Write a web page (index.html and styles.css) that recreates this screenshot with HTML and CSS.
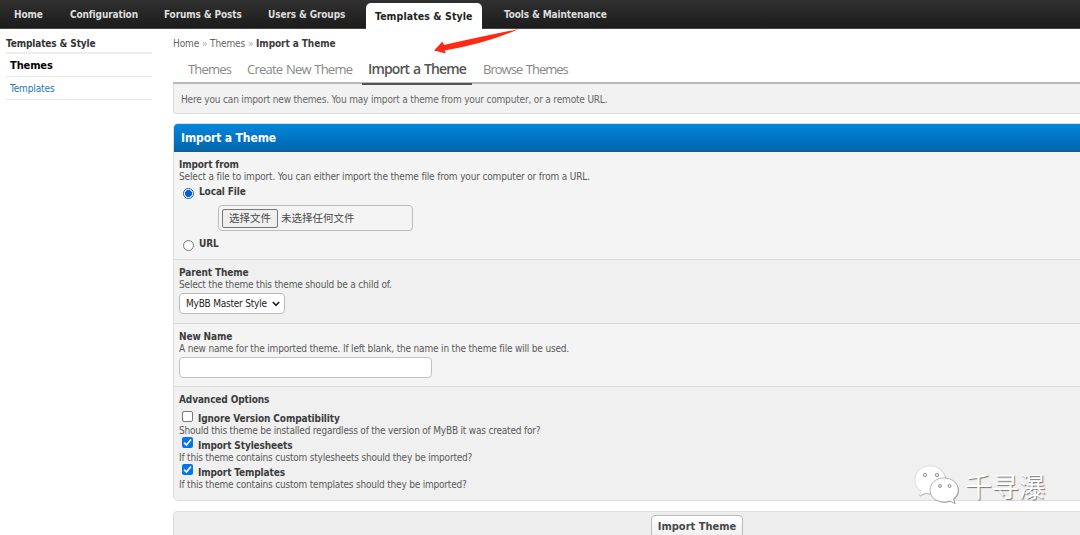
FILE: index.html
```html
<!DOCTYPE html>
<html lang="en">
<head>
<meta charset="utf-8">
<title>Import a Theme</title>
<link rel="stylesheet" href="styles.css">
</head>
<body>
<nav class="menu">
  <a>Home</a><a>Configuration</a><a>Forums &amp; Posts</a><a>Users &amp; Groups</a><a class="active">Templates &amp; Style</a><a class="last">Tools &amp; Maintenance</a>
</nav>
<div class="layout">
  <aside class="side">
    <div class="side-title">Templates &amp; Style</div>
    <a class="side-active">Themes</a>
    <a class="side-link">Templates</a>
  </aside>
  <main class="main">
    <div class="crumbs"><span>Home</span><i>»</i><span>Themes</span><i>»</i><b>Import a Theme</b></div>
    <div class="tabs"><a class="t1">Themes</a><a class="t2">Create New Theme</a><a class="t3">Import a Theme</a><a class="t4">Browse Themes</a></div>
    <div class="intro">Here you can import new themes. You may import a theme from your computer, or a remote URL.</div>
    <section class="panel">
      <h1>Import a Theme</h1>
      <div class="row r1">
        <b>Import from</b>
        <p class="p1">Select a file to import. You can either import the theme file from your computer or from a URL.</p>
        <label class="radio local"><span class="dot on"></span><b>Local File</b></label>
        <div class="file"><span class="choose">选择文件</span><span class="nofile">未选择任何文件</span></div>
        <label class="radio"><span class="dot"></span><b>URL</b></label>
      </div>
      <div class="row alt r2">
        <b>Parent Theme</b>
        <p>Select the theme this theme should be a child of.</p>
        <div class="select"><span>MyBB Master Style</span><svg width="8" height="6" viewBox="0 0 8 6"><path d="M.8 1 4 4.3 7.2 1" fill="none" stroke="#222" stroke-width="1.7"/></svg></div>
      </div>
      <div class="row r3">
        <b>New Name</b>
        <p>A new name for the imported theme. If left blank, the name in the theme file will be used.</p>
        <div class="input"></div>
      </div>
      <div class="row alt r4">
        <b>Advanced Options</b>
        <label class="check first"><span class="box"></span><b>Ignore Version Compatibility</b></label>
        <p>Should this theme be installed regardless of the version of MyBB it was created for?</p>
        <label class="check"><span class="box on"><svg width="11" height="11" viewBox="0 0 11 11"><path d="M2 5.7 4.4 8 9 2.5" fill="none" stroke="#fff" stroke-width="1.7"/></svg></span><b>Import Stylesheets</b></label>
        <p>If this theme contains custom stylesheets should they be imported?</p>
        <label class="check"><span class="box on"><svg width="11" height="11" viewBox="0 0 11 11"><path d="M2 5.7 4.4 8 9 2.5" fill="none" stroke="#fff" stroke-width="1.7"/></svg></span><b>Import Templates</b></label>
        <p>If this theme contains custom templates should they be imported?</p>
      </div>
    </section>
    <div class="submit"><span class="button">Import Theme</span></div>
  </main>
</div>
<svg class="arrow" width="90" height="30" viewBox="0 0 90 30"><path d="M4 21.500 12.500 12.500 14 16Q45 9 89 0Q56 14.500 14.500 21.500L16 24.500Z" fill="#ff2814"/></svg>
<div class="mark">
  <svg width="46" height="40" viewBox="0 0 46 40">
    <g fill="#aaa" transform="translate(.8 .8)">
      <path d="M17 2C8 2 2 8 2 16c0 5 2.500 8.500 6 11l-2 5 6-3c2 .6 4 .8 6 .8 8 0 14.500-6 14.500-13.800S26 2 17 2Z"/>
      <path d="M31 14c-8 0-14 5-14 12s6 12 14 12c2 0 4-.3 6-1l5 2.500-1.600-4.500c3-2.200 4.800-5.200 4.800-9C45.200 19 39 14 31 14Z"/>
    </g>
    <g fill="#fff" stroke="#ccc" stroke-width=".6">
      <path d="M17 2C8 2 2 8 2 16c0 5 2.500 8.500 6 11l-2 5 6-3c2 .6 4 .8 6 .8 8 0 14.500-6 14.500-13.800S26 2 17 2Z"/>
      <path stroke="#888" d="M31 14c-8 0-14 5-14 12s6 12 14 12c2 0 4-.3 6-1l5 2.500-1.600-4.500c3-2.200 4.800-5.200 4.800-9C45.200 19 39 14 31 14Z"/>
    </g>
    <g fill="#e8e8e8" stroke="#999" stroke-width="1"><circle cx="12" cy="11" r="1.700"/><circle cx="24" cy="11" r="1.700"/><circle cx="27" cy="22" r="1.500"/><circle cx="36.500" cy="22" r="1.500"/></g>
  </svg>
  <span>千寻瀑</span>
</div>
</body>
</html>
```
FILE: styles.css
```css
* { box-sizing: border-box; }
body { margin: 0; width: 1080px; height: 535px; overflow: hidden; background: #fff; color: #484848; font: 10px/12px "DejaVu Sans Condensed", "DejaVu Sans", "Noto Sans CJK SC", sans-serif; font-stretch: condensed; white-space: nowrap; position: relative; letter-spacing: -.12px; }
b { color: #3d3d3d; }
p { margin: 0; color: #595959; letter-spacing: -.18px; }
.menu { height: 29px; background: linear-gradient(#303030, #1c1c1c); border-bottom: 1px solid #444; display: grid; grid-template-columns: 56px 94px 104px 112px 116px 1fr; color: #ddd; font-weight: bold; line-height: 29px; }
.menu a { padding-left: 14px; }
.menu .active { margin-top: 3px; height: 26px; padding-left: 9px; background: #fff; color: #222; border-radius: 5px 5px 0 0; line-height: 27px; font-size: 10.500px; letter-spacing: .08px; }
.menu .last { padding-left: 22px; }
.layout { display: flex; }
.side { width: 146px; margin: 8px 21px 0 6px; flex: none; }
.side-title { height: 17px; line-height: 14px; font-weight: bold; border-bottom: 2px solid #eee; color: #333; }
.side a { display: block; padding-left: 4px; border-bottom: 1px solid #e8e8e8; height: 23px; line-height: 24px; }
.side .side-active { font-size: 11px; font-weight: bold; color: #000; }
.side-link { color: #2277b5; }
.main { width: 920px; flex: none; }
.crumbs { margin-top: 9px; height: 12px; color: #666; letter-spacing: -.12px; }
.crumbs b { letter-spacing: -.08px; }
.crumbs i { font-style: normal; color: #aaa; padding: 0 2.800px; }
.tabs { height: 34px; border-bottom: 2px solid #b9b9b9; display: flex; font: 13px/38px "Open Sans", sans-serif; color: #888; letter-spacing: -.8px; word-spacing: 1px; }
.tabs a { height: 35px; flex: none; }
.tabs .t1 { width: 59px; margin-left: 15px; }
.t2 { width: 114px; letter-spacing: -.78px; }
.tabs .t3 { width: 110px; margin-left: 1px; padding-left: 6px; border-bottom: 2px solid #555; color: #555; font-weight: 600; font-size: 14px; letter-spacing: -.87px; }
.t4 { padding-left: 11px; letter-spacing: -.97px; }
.intro { height: 30px; border: 1px solid #ddd; border-top: 0; background: #f2f2f2; padding-left: 7px; line-height: 31px; color: #666; border-radius: 0 0 0 3px; letter-spacing: -.17px; }
.panel { margin-top: 9px; border: 1px solid #ddd; border-radius: 5px; height: 378px; overflow: hidden; }
h1 { margin: 0; height: 28px; background: linear-gradient(#0386dd, #0066ae); border-bottom: 1px solid #2a5675; color: #fff; font-size: 12px; line-height: 28px; padding-left: 7px; }
.row { background: #f4f4f4; border-bottom: 1px solid #d8d8d8; padding: 6px 5px 0; }
.row > b { display: block; }
.alt { background: #f0f0f0; }
.r1 { height: 108px; padding-top: 7px; }
.p1 { letter-spacing: -.16px; }
.r2 { height: 64px; padding-top: 7px; }
.r3 { height: 63px; padding-top: 7px; }
.r4 { height: 114px; padding-top: 7px; }
.radio { display: flex; height: 18px; line-height: 14px; padding-left: 4px; gap: 5px; }
.dot { width: 11px; height: 11px; margin-top: 3px; border: 1px solid #777; border-radius: 50%; background: #fff; }
.dot.on { border-color: #0560cf; background: radial-gradient(#0560cf 0 3.2px, #fff 3.8px); }
.local { line-height: 18px; }
.local .dot { margin-top: 5px; }
.file { width: 195px; height: 26px; margin: 4px 0 6px 39px; border: 1px solid #bbb; border-radius: 4px; display: flex; align-items: center; padding-left: 3px; gap: 3px; font: 10.500px "Noto Sans CJK SC", sans-serif; letter-spacing: 0; }
.choose { width: 56px; height: 19px; border: 1px solid #777; border-radius: 2px; background: #efefef; line-height: 16px; text-align: center; }
.nofile { margin-top: -1px; }
.select { width: 106px; height: 21px; margin-top: 2px; border: 1px solid #bbb; border-radius: 4px; background: #fff; color: #222; display: flex; align-items: center; justify-content: space-between; padding: 0 4px 0 6px; letter-spacing: -.22px; }
.input { width: 253px; height: 21px; margin-top: 2px; border: 1px solid #c3c3c3; border-radius: 4px; background: #fff; }
.r4 p { letter-spacing: -.2px; }
.check { display: flex; height: 15px; line-height: 18px; padding-left: 3px; gap: 5px; }
.check.first { margin-top: 4px; height: 15px; }
.box { width: 11px; height: 11px; border: 1px solid #777; border-radius: 2px; background: #fff; margin-top: 1px; }
.box.on { background: #0874e8; border: 0; margin-top: 0; }
.box svg { display: block; }
.submit { margin-top: 10px; height: 40px; background: #eee; border: 1px solid #ddd; border-radius: 4px; padding-top: 3px; padding-left: 477px; }
.button { display: block; width: 92px; height: 24px; border: 1px solid #bbb; border-radius: 4px; background: linear-gradient(#fff, #eee); font-size: 11px; font-weight: bold; line-height: 22px; text-align: center; letter-spacing: 0; }
.arrow { position: absolute; left: 430px; top: 29px; }
.mark { position: absolute; left: 913px; top: 464px; display: flex; gap: 6px; color: #fff; font: 27px/44px "Noto Sans CJK SC", sans-serif; letter-spacing: -.3px; text-shadow: 1px 1px 1px #777; }
```
